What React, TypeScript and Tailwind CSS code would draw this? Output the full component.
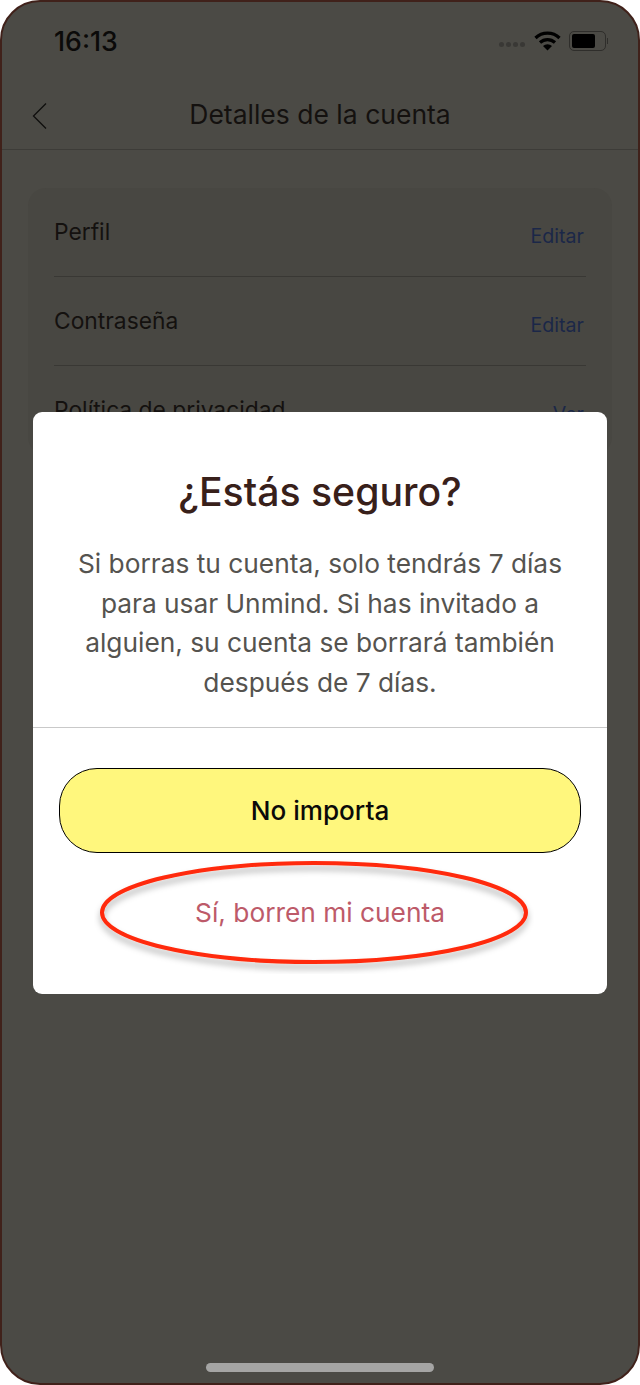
import React from 'react';

const rows = [
  { label: 'Perfil', action: 'Editar' },
  { label: 'Contraseña', action: 'Editar' },
  { label: 'Política de privacidad', action: 'Ver' },
];

const App: React.FC = () => {
  return (
    <div className="w-[640px] h-[1385px] bg-white font-['Inter',sans-serif]">
      <div className="relative w-full h-full overflow-hidden rounded-[40px] border-2 border-[#40211a] bg-[#4b4a45]">
        {/* Status bar */}
        <div className="flex items-center justify-between h-[78px] pl-[52px] pr-[30px]">
          <span className="text-[26.7px] font-medium text-[#0b0a09]">16:13</span>
          <div className="flex items-center">
            <div className="flex gap-[2px] mt-[7px] mr-[9px]">
              <span className="w-[5px] h-[5px] rounded-full bg-[#393835]" />
              <span className="w-[5px] h-[5px] rounded-full bg-[#393835]" />
              <span className="w-[5px] h-[5px] rounded-full bg-[#393835]" />
              <span className="w-[5px] h-[5px] rounded-full bg-[#393835]" />
            </div>
            <svg width="27" height="20" viewBox="0 0 27 20" className="mr-[8px]">
              <path d="M1.5 7 A17 17 0 0 1 25.5 7" fill="none" stroke="#000" strokeWidth="3.2" />
              <path d="M6 11.5 A11 11 0 0 1 21 11.5" fill="none" stroke="#000" strokeWidth="3.2" />
              <path d="M9 15 L13.5 19.5 L18 15 A6.5 6.5 0 0 0 9 15 Z" fill="#000" />
            </svg>
            <div className="flex items-center">
              <div className="w-[37px] h-[20px] rounded-[5px] border border-[#2f2e2b] p-[2px]">
                <div className="w-[23px] h-full rounded-[2px] bg-black" />
              </div>
              <span className="w-[1px] h-[6px] ml-[1px] bg-[#2f2e2b]" />
            </div>
          </div>
        </div>

        {/* Header */}
        <div className="relative flex items-center justify-center h-[70px] border-b border-[#3d3c38]">
          <svg width="16" height="28" viewBox="0 0 16 28" className="absolute left-[30px] top-[22px]">
            <path d="M14 1.5 L1.5 14 L14 26.5" fill="none" stroke="#0f0e0d" strokeWidth="1.3" />
          </svg>
          <span className="text-[26.5px] font-normal text-[#14110f]">Detalles de la cuenta</span>
        </div>

        {/* Account card */}
        <div className="mx-[26px] mt-[38px] rounded-[18px] bg-[#484742] px-[26px]">
          {rows.map((row) => (
            <div key={row.label} className="flex justify-between h-[89px] border-b border-[#393834] pt-[29px]">
              <span className="text-[22.8px] leading-[30px] font-normal text-[#14110f]">{row.label}</span>
              <span className="text-[19.6px] leading-[30px] mt-[4px] mr-[2px] font-normal text-[#1b2748]">{row.action}</span>
            </div>
          ))}
        </div>

        {/* Dialog */}
        <div className="absolute left-[31px] top-[410px] w-[574px] h-[582px] rounded-[9px] bg-white">
          <h2 className="pt-[50px] text-center text-[39.2px] leading-[60px] font-medium text-[#38201a]">¿Estás seguro?</h2>
          <p className="mt-[22px] px-[30px] text-center text-[26.3px] leading-[39.5px] text-[#55534f]">
            Si borras tu cuenta, solo tendrás 7 días para usar Unmind. Si has invitado a alguien, su cuenta se borrará también después de 7 días.
          </p>
          <div className="mt-[25px] border-t border-[#c9c9c9] px-[26px] pt-[40px]">
            <button className="w-full h-[85px] rounded-[38px] border-[1.5px] border-black bg-[#fff77d] text-[26.1px] font-medium text-[#0b0a09]">
              No importa
            </button>
            <button className="block w-full mt-[40px] text-center text-[26.3px] leading-[40px] font-normal text-[#bd5a69]">
              Sí, borren mi cuenta
            </button>
          </div>
        </div>

        {/* Red ellipse annotation */}
        <svg width="440" height="120" viewBox="0 0 440 120" className="absolute left-[92px] top-[852px] pointer-events-none">
          <defs>
            <filter id="ellipseShadow" x="-10%" y="-20%" width="120%" height="150%">
              <feDropShadow dx="0" dy="5" stdDeviation="3" floodColor="#000" floodOpacity="0.3" />
            </filter>
          </defs>
          <ellipse cx="220" cy="58.5" rx="212" ry="49.5" fill="none" stroke="#ff2a0a" strokeWidth="4" filter="url(#ellipseShadow)" />
        </svg>

        {/* Home indicator */}
        <div className="absolute left-[204px] bottom-[11px] w-[228px] h-[9px] rounded-full bg-[#a5a5a4]" />
      </div>
    </div>
  );
};

export default App;
